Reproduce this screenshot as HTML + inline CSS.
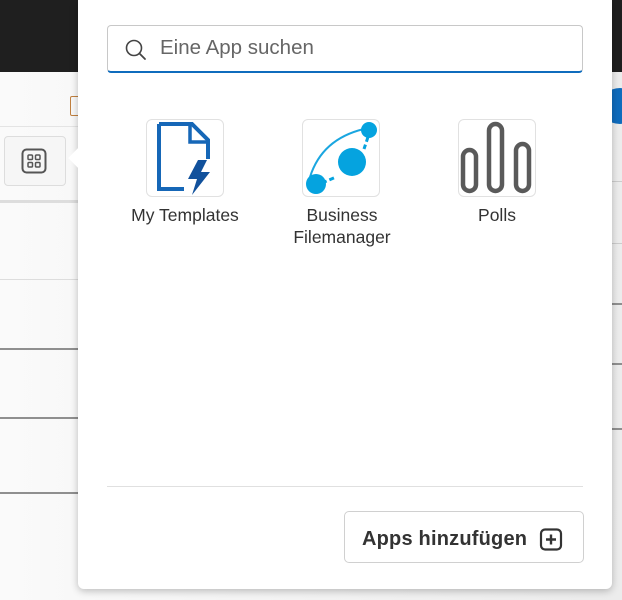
<!DOCTYPE html><html><head><style>
body{margin:0;width:622px;height:600px;position:relative;overflow:hidden;background:#f3f3f3;font-family:"Segoe UI","Liberation Sans",sans-serif}
.a{position:absolute}
.ln{position:absolute;height:2px;background:#8f8f8f}
.lbl{position:absolute;font-size:17.5px;color:#333;text-align:center;line-height:22px}
.ic{position:absolute;width:76px;height:76px;border:1px solid #e1e1e1;border-radius:6px;background:#fff}
</style></head><body>
<div class="a" style="left:0;top:0;width:622px;height:72px;background:#1f1f1f"></div>
<div class="a" style="left:0;top:72px;width:622px;height:528px;background:linear-gradient(90deg,#fafafa,#ececec)"></div>
<div class="a" style="left:0;top:126px;width:80px;height:1px;background:#e4e4e4"></div>
<div class="a" style="left:0;top:200px;width:80px;height:3px;background:#ddd"></div>
<div class="a" style="left:4px;top:136px;width:60px;height:48px;border:1px solid #ddd;border-radius:4px;background:#f6f6f6"></div>
<svg class="a" style="left:21px;top:148px" width="26" height="26" viewBox="0 0 26 26"><rect x="1.5" y="1.5" width="23" height="23" rx="4" fill="none" stroke="#555" stroke-width="2"/><rect x="7" y="7" width="4.5" height="4.5" rx="1" fill="none" stroke="#555" stroke-width="1.5"/><rect x="14.5" y="7" width="4.5" height="4.5" rx="1" fill="none" stroke="#555" stroke-width="1.5"/><rect x="7" y="14.5" width="4.5" height="4.5" rx="1" fill="none" stroke="#555" stroke-width="1.5"/><rect x="14.5" y="14.5" width="4.5" height="4.5" rx="1" fill="none" stroke="#555" stroke-width="1.5"/></svg>
<div class="a" style="left:70px;top:96px;width:8px;height:18px;border:1px solid #c08040;border-radius:2px"></div>
<div class="ln" style="left:0;top:279px;width:80px;height:1px;background:#ddd"></div>
<div class="ln" style="left:0;top:348px;width:80px"></div>
<div class="ln" style="left:0;top:417px;width:80px"></div>
<div class="ln" style="left:0;top:492px;width:80px"></div>
<div class="a" style="left:600px;top:88px;width:40px;height:36px;border-radius:50%;background:#0f6cbd"></div>
<div class="ln" style="left:612px;top:181px;width:10px;height:1px;background:#ccc"></div>
<div class="ln" style="left:612px;top:243px;width:10px;height:1px;background:#ccc"></div>
<div class="ln" style="left:612px;top:303px;width:10px"></div>
<div class="ln" style="left:612px;top:363px;width:10px"></div>
<div class="ln" style="left:612px;top:428px;width:10px"></div>
<div class="a" style="left:78px;top:0;width:534px;height:589px;background:#fff;border-radius:0 0 6px 6px;box-shadow:0 2px 8px rgba(0,0,0,.25)"></div>
<div class="a" style="left:71px;top:151px;width:14px;height:14px;background:#fff;transform:rotate(45deg)"></div>
<div class="a" style="left:107px;top:25px;width:476px;height:48px;border:1px solid #c8c8c8;border-bottom:2px solid #0f6cbd;border-radius:4px;box-sizing:border-box"></div>
<svg class="a" style="left:124px;top:38px" width="24" height="24" viewBox="0 0 24 24"><circle cx="10" cy="10" r="7.5" fill="none" stroke="#444" stroke-width="1.6"/><path d="M15.5 15.5L21 21" stroke="#444" stroke-width="1.8" stroke-linecap="round"/></svg>
<div class="a" style="left:160px;top:36px;font-size:20.5px;color:#666">Eine App suchen</div>
<div class="ic" style="left:146px;top:119px"></div>
<svg class="a" style="left:146px;top:119px" width="78" height="78" viewBox="0 0 78 78"><path d="M13 5H46L62 21V40" fill="none" stroke="#1667b7" stroke-width="4"/><path d="M13 5V70H38" fill="none" stroke="#1667b7" stroke-width="4"/><path d="M44 7V23H60" fill="none" stroke="#1667b7" stroke-width="3.5"/><path d="M52 41L42 60H51L46 76L64 53H55L61 41Z" fill="#11519c"/></svg>
<div class="ic" style="left:302px;top:119px"></div>
<svg class="a" style="left:302px;top:119px" width="78" height="78" viewBox="0 0 78 78"><path d="M8 58Q20 20 62 10" fill="none" stroke="#1aa6e0" stroke-width="2"/><path d="M66 18L62 30M20 64L34 58" stroke="#05a3df" stroke-width="3" stroke-dasharray="5 3"/><circle cx="67" cy="11" r="8" fill="#05a3df"/><circle cx="50" cy="43" r="14" fill="#05a3df"/><circle cx="14" cy="65" r="10" fill="#05a3df"/></svg>
<div class="ic" style="left:458px;top:119px"></div>
<svg class="a" style="left:458px;top:119px" width="78" height="78" viewBox="0 0 78 78"><rect x="5" y="31" width="13" height="41" rx="6.5" fill="none" stroke="#5a5a5a" stroke-width="4.5"/><rect x="31" y="5" width="13" height="67" rx="6.5" fill="none" stroke="#5a5a5a" stroke-width="4.5"/><rect x="58" y="25" width="13" height="47" rx="6.5" fill="none" stroke="#5a5a5a" stroke-width="4.5"/></svg>
<div class="lbl" style="left:115px;top:204px;width:140px">My Templates</div>
<div class="lbl" style="left:272px;top:204px;width:140px">Business<br>Filemanager</div>
<div class="lbl" style="left:427px;top:204px;width:140px">Polls</div>
<div class="a" style="left:107px;top:486px;width:476px;height:1px;background:#e0e0e0"></div>
<div class="a" style="left:344px;top:511px;width:240px;height:52px;border:1px solid #d0d0d0;border-radius:5px;box-sizing:border-box"></div>
<div class="a" style="left:362px;top:528px;font-size:20px;font-weight:bold;color:#333;letter-spacing:.2px">Apps hinzufügen</div>
<svg class="a" style="left:539px;top:528px" width="26" height="24" viewBox="0 0 26 24"><rect x="2" y="1.5" width="20" height="20" rx="4" fill="none" stroke="#333" stroke-width="2.2"/><path d="M12 6.5V16.5M7 11.5H17" stroke="#333" stroke-width="2.4"/></svg>
</body></html>
